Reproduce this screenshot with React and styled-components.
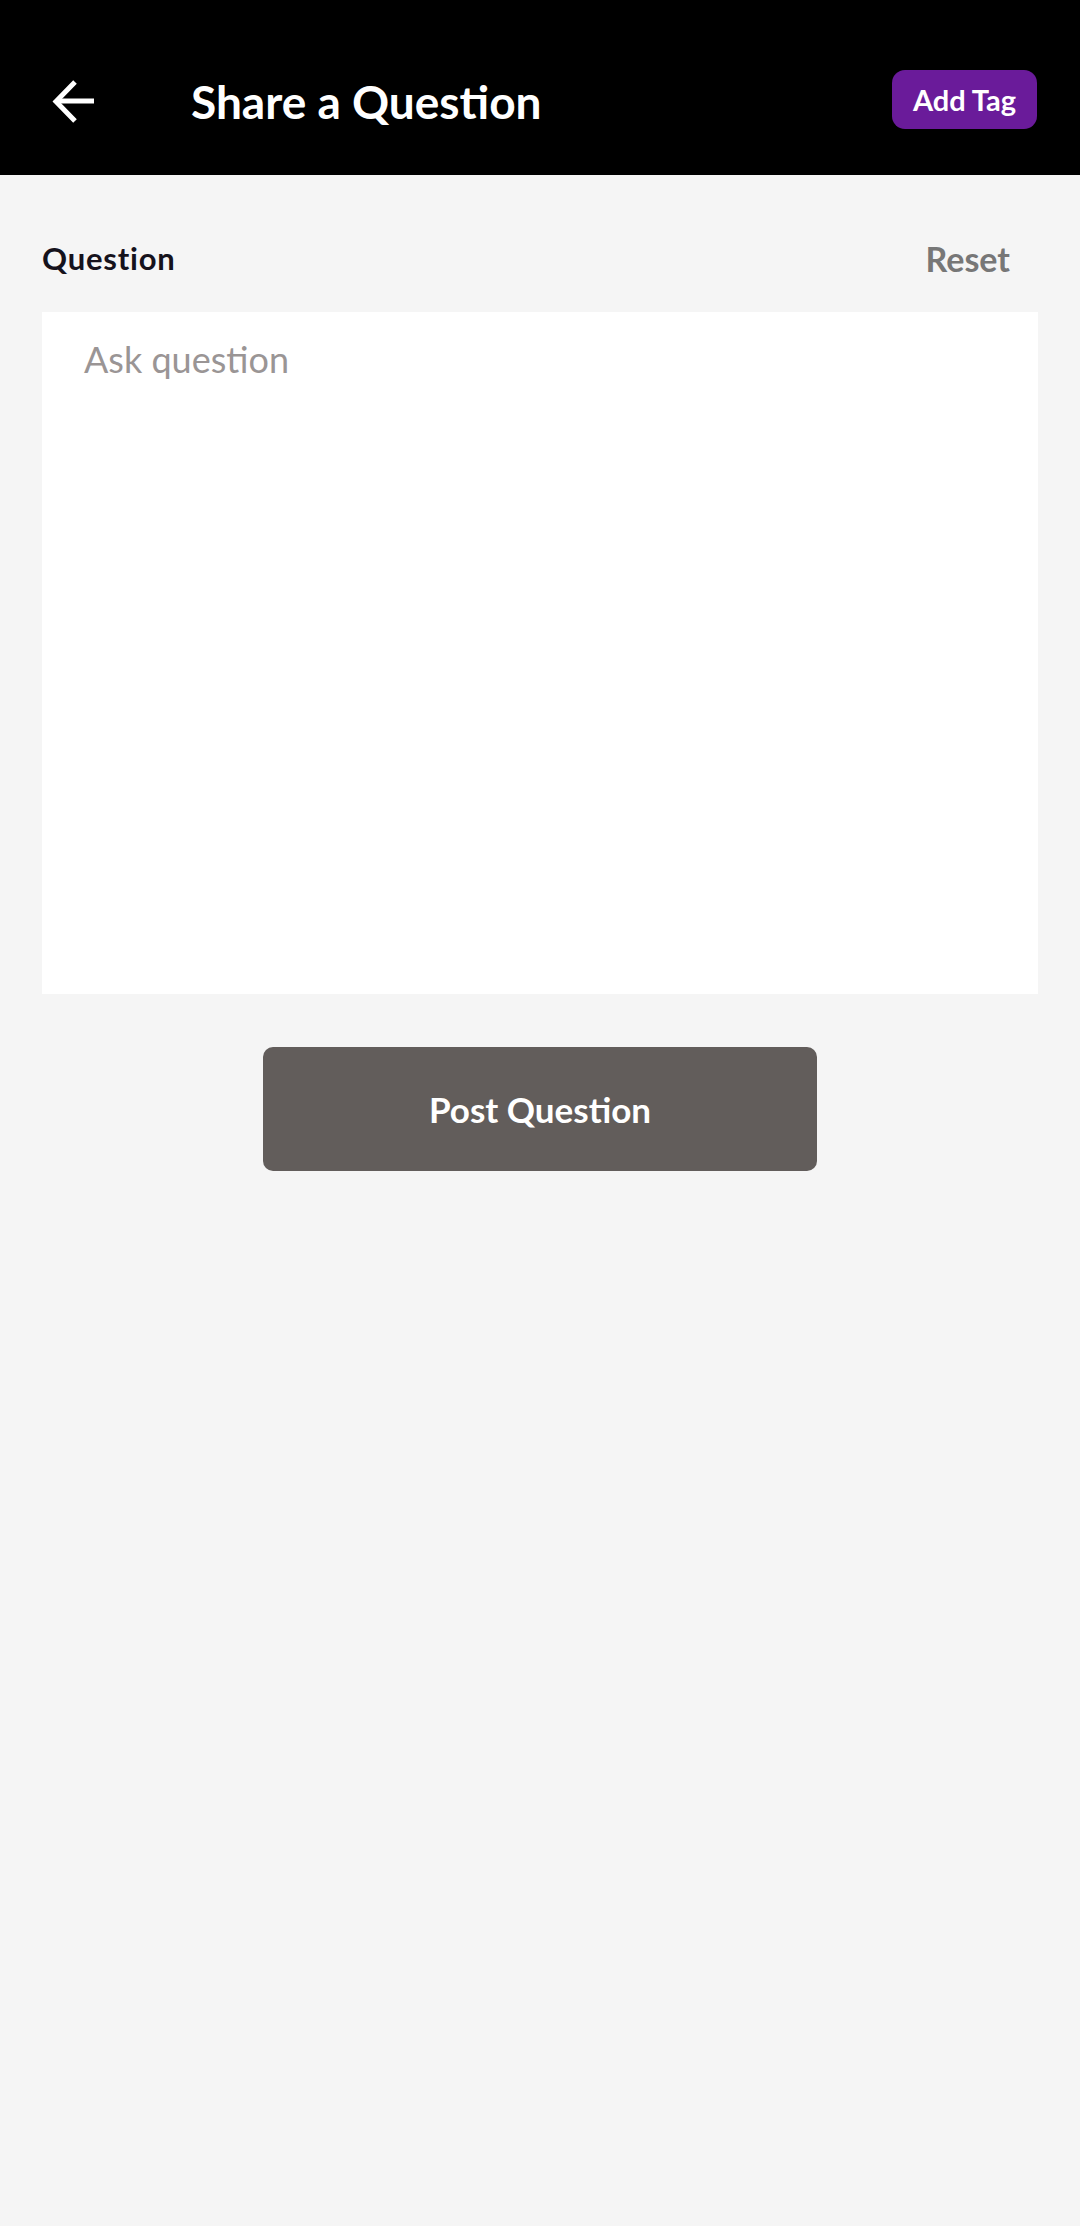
import React from "react";
import styled, { createGlobalStyle } from "styled-components";

const Global = createGlobalStyle`
  html, body { margin: 0; padding: 0; background: #f5f5f5; }
  body { font-family: "Lato", "Noto Sans", sans-serif; }
  * { box-sizing: border-box; }
`;

const Page = styled.div`
  min-height: 2226px;
  background: #f5f5f5;
  display: flex;
  flex-direction: column;
`;

const Header = styled.header`
  height: 175px;
  background: #000;
  display: flex;
  align-items: flex-start;
  padding: 0 43px 0 52px;
`;

const BackButton = styled.button`
  width: 44px;
  height: 44px;
  padding: 0;
  margin-top: 80px;
  border: 0;
  background: transparent;
  display: flex;
  align-items: center;
  justify-content: center;
`;

const Title = styled.h1`
  margin: 74px 0 0 95px;
  flex: 1;
  color: #fff;
  font-size: 46px;
  line-height: 55px;
  font-weight: 700;
  letter-spacing: 0;
`;

const TagButton = styled.button`
  width: 145px;
  height: 59px;
  margin-top: 70px;
  border: 0;
  border-radius: 13px;
  background: #6a1b9a;
  color: #fff;
  font-family: inherit;
  font-size: 29px;
  font-weight: 700;
`;

const Content = styled.main`
  padding: 0 42px;
  display: flex;
  flex-direction: column;
`;

const LabelRow = styled.div`
  height: 137px;
  display: flex;
  align-items: center;
  justify-content: space-between;
  padding-top: 29px;
`;

const Label = styled.span`
  color: #15121c;
  font-size: 31px;
  font-weight: 700;
  letter-spacing: 0.8px;
`;

const Reset = styled.span`
  color: #777;
  font-size: 34px;
  font-weight: 700;
  margin-right: 28px;
`;

const Field = styled.div`
  height: 682px;
  background: #fff;
  padding: 25px 42px;
`;

const Placeholder = styled.span`
  color: #9a9595;
  font-size: 36px;
`;

const PostButton = styled.button`
  align-self: center;
  width: 554px;
  height: 124px;
  margin-top: 53px;
  border: 0;
  border-radius: 10px;
  background: #625d5b;
  color: #fff;
  font-family: inherit;
  font-size: 35px;
  font-weight: 700;
`;

const Arrow = () => (
  <svg width="44" height="44" viewBox="0 0 44 44" fill="none">
    <path d="M42 21H5" stroke="#fff" strokeWidth="5" />
    <path d="M23 2L4 21.5L23 41" stroke="#fff" strokeWidth="5" />
  </svg>
);

export default function App() {
  return (
    <Page>
      <Global />
      <Header>
        <BackButton aria-label="Back"><Arrow /></BackButton>
        <Title>Share a Question</Title>
        <TagButton>Add Tag</TagButton>
      </Header>
      <Content>
        <LabelRow>
          <Label>Question</Label>
          <Reset>Reset</Reset>
        </LabelRow>
        <Field><Placeholder>Ask question</Placeholder></Field>
        <PostButton>Post Question</PostButton>
      </Content>
    </Page>
  );
}
